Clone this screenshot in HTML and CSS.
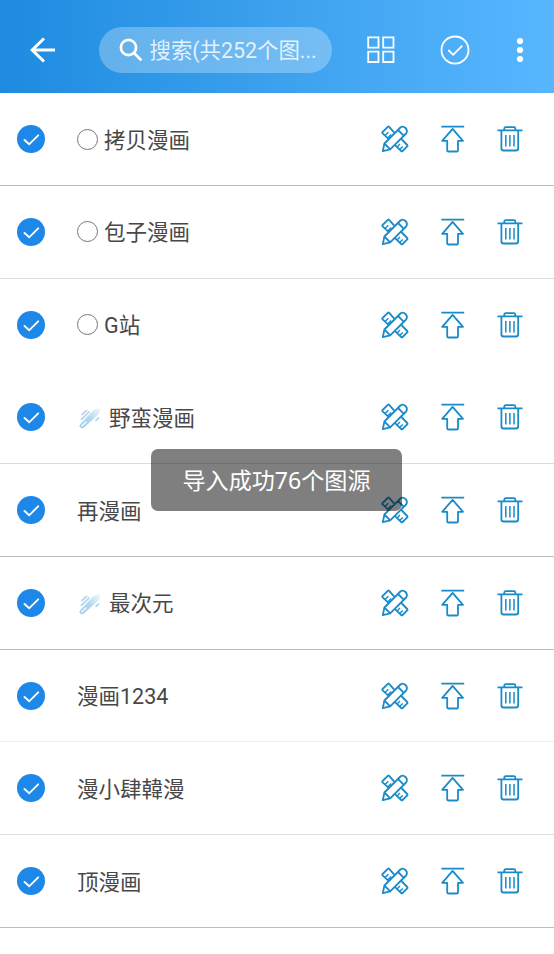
FILE: index.html
```html
<!DOCTYPE html>
<html lang="zh-CN">
  <head>
    <meta charset="UTF-8" />
    <meta name="viewport" content="width=device-width, initial-scale=1.0" />
    <title>图源管理</title>
    <link rel="stylesheet" href="styles.css">
  </head>
  <body>
    <svg class="sprite" aria-hidden="true">
      <defs>
        <linearGradient id="comet-fill" x1="1" y1="0" x2="0" y2="1">
          <stop offset="0" stop-color="#f4f9fc" />
          <stop offset="0.5" stop-color="#b0d8f2" />
          <stop offset="1" stop-color="#a5cbe6" />
        </linearGradient>
      </defs>
      <symbol id="check" viewBox="0 0 28 28">
        <circle cx="14" cy="14" r="14" fill="#1e88e9" />
        <path d="M7.5 15l4.7 4.3 9-9" fill="none" stroke="#fff" stroke-width="1.9" stroke-linecap="round" />
      </symbol>
      <symbol id="edit" viewBox="0 0 28 28">
        <path d="M13.2 7.6L8.2 1.8q-.7-.7-1.4 0L1.6 7q-.7.7 0 1.4l6 5.4M20.4 14l5.8 6q.7.7 0 1.4l-4.6 4.6q-.7.7-1.4 0L14 20.2" />
        <path d="M4 10.6l3.4-3.4M6.8 13l3.4-3.4M16 22l3-3M18.6 24.6l3.2-3.2" stroke-width="1.4" />
        <path d="M1.8 26.2l1.6-7.7L19.4 2.5q2.6-2 5.1.5t.6 5.5L9.2 24.4zM3.4 18.5l5.8 5.9M17 5l5.9 5.8" />
      </symbol>
      <symbol id="top" viewBox="0 0 28 28">
        <path d="M2.3 1.6h22.9M13.6 3.9L3.2 15.8h5v9.4q0 1.3 1.3 1.3h8.2q1.3 0 1.3-1.3v-9.4h5z" />
      </symbol>
      <symbol id="trash" viewBox="0 0 28 28">
        <path d="M1.5 5.4h25M8.3 5.2V3.6q0-1.4 1.4-1.4h8.2q1.4 0 1.4 1.4v1.6M5.4 5.6v17.6q0 2.3 2.3 2.3h12.2q2.3 0 2.3-2.3V5.6" />
        <path d="M9.8 10v11.6M13.9 10v11.6M18 10v11.6" stroke-width="1.5" />
      </symbol>
      <symbol id="comet" viewBox="0 0 22 22">
        <path d="M1.2 17.2L14.2 3.2q3-2.4 7-1.2.4 4-3 6.6L5 20.4Q2.8 22 1.2 20.6t0-3.4z" fill="url(#comet-fill)" />
        <path d="M3 7.6L7.6 3.4M2.4 12.4L10 5M17 13.4l2.6-2.4" fill="none" stroke="#b0d4ec" stroke-width="1.7" stroke-linecap="round" />
        <path d="M2.8 19l4-4" fill="none" stroke="#f1f9ff" stroke-width="1.6" stroke-linecap="round" />
      </symbol>
    </svg>

    <header class="toolbar">
      <svg class="back" viewBox="0 0 26 26">
        <path d="M14 1.5L2.2 13 14 24.5M2.5 13h22.5" />
      </svg>
      <div class="search">
        <svg class="search-icon" viewBox="0 0 24 24">
          <circle cx="9.5" cy="9.5" r="7.6" />
          <path d="M15 15l7.4 7.4" />
        </svg>
        <span>搜索(共252个图...</span>
      </div>
      <svg class="grid" viewBox="0 0 28 28">
        <path d="M1.2 1.3h10.3v10.3H1.2zM16.2 1.3h10.3v10.3H16.2zM1.2 15.7h10.3V26H1.2zM16.2 15.7h10.3V26H16.2z" />
      </svg>
      <svg class="select-all" viewBox="0 0 30 30">
        <circle cx="15" cy="15" r="13.5" />
        <path d="M8.8 15.5l4.4 4.3 8.6-8.6" stroke-linecap="round" />
      </svg>
      <svg class="more" viewBox="0 0 8 26">
        <circle cx="4" cy="4" r="3.1" />
        <circle cx="4" cy="13" r="3.1" />
        <circle cx="4" cy="22" r="3.1" />
      </svg>
    </header>

    <main class="list">
      <div class="row">
        <svg class="check"><use href="#check" /></svg>
        <div class="name"><i class="ring"></i>拷贝漫画</div>
        <svg class="icon"><use href="#edit" /></svg>
        <svg class="icon"><use href="#top" /></svg>
        <svg class="icon"><use href="#trash" /></svg>
      </div>
      <div class="row light">
        <svg class="check"><use href="#check" /></svg>
        <div class="name"><i class="ring"></i>包子漫画</div>
        <svg class="icon"><use href="#edit" /></svg>
        <svg class="icon"><use href="#top" /></svg>
        <svg class="icon"><use href="#trash" /></svg>
      </div>
      <div class="row no-line">
        <svg class="check"><use href="#check" /></svg>
        <div class="name"><i class="ring"></i>G站</div>
        <svg class="icon"><use href="#edit" /></svg>
        <svg class="icon"><use href="#top" /></svg>
        <svg class="icon"><use href="#trash" /></svg>
      </div>
      <div class="row light">
        <svg class="check"><use href="#check" /></svg>
        <div class="name"><svg class="comet"><use href="#comet" /></svg>野蛮漫画</div>
        <svg class="icon"><use href="#edit" /></svg>
        <svg class="icon"><use href="#top" /></svg>
        <svg class="icon"><use href="#trash" /></svg>
      </div>
      <div class="row">
        <svg class="check"><use href="#check" /></svg>
        <div class="name">再漫画</div>
        <svg class="icon"><use href="#edit" /></svg>
        <svg class="icon"><use href="#top" /></svg>
        <svg class="icon"><use href="#trash" /></svg>
      </div>
      <div class="row">
        <svg class="check"><use href="#check" /></svg>
        <div class="name"><svg class="comet"><use href="#comet" /></svg>最次元</div>
        <svg class="icon"><use href="#edit" /></svg>
        <svg class="icon"><use href="#top" /></svg>
        <svg class="icon"><use href="#trash" /></svg>
      </div>
      <div class="row faint">
        <svg class="check"><use href="#check" /></svg>
        <div class="name">漫画1234</div>
        <svg class="icon"><use href="#edit" /></svg>
        <svg class="icon"><use href="#top" /></svg>
        <svg class="icon"><use href="#trash" /></svg>
      </div>
      <div class="row light">
        <svg class="check"><use href="#check" /></svg>
        <div class="name">漫小肆韓漫</div>
        <svg class="icon"><use href="#edit" /></svg>
        <svg class="icon"><use href="#top" /></svg>
        <svg class="icon"><use href="#trash" /></svg>
      </div>
      <div class="row">
        <svg class="check"><use href="#check" /></svg>
        <div class="name">顶漫画</div>
        <svg class="icon"><use href="#edit" /></svg>
        <svg class="icon"><use href="#top" /></svg>
        <svg class="icon"><use href="#trash" /></svg>
      </div>
    </main>

    <div class="toast">导入成功76个图源</div>
  </body>
</html>
```

FILE: styles.css
```css
:root {
  --icon-blue: #1a8bc8;
  --line: #bdbdbd;
}

* {
  box-sizing: border-box;
}

body {
  font-family: Roboto, "Noto Sans CJK SC", sans-serif;
  margin: 0;
  height: 954px;
  background-color: #fff;
  color: #484848;
  overflow: hidden;
}

svg {
  display: block;
  flex: none;
}

.sprite {
  position: absolute;
  width: 0;
  height: 0;
}

.toolbar {
  display: flex;
  align-items: center;
  height: 93px;
  padding: 7px 30px 0;
  background: linear-gradient(to right, #1e8be0, #3ca1ee 50%, #58b6ff);
}

.toolbar svg {
  fill: none;
  stroke: #fff;
  stroke-width: 1.8;
}

.toolbar .back {
  width: 26px;
  height: 26px;
  stroke-width: 3;
}

.search {
  display: flex;
  align-items: center;
  width: 234px;
  height: 46px;
  margin-left: 42.5px;
  padding-left: 20px;
  border-radius: 23px;
  background-color: rgba(255, 255, 255, 0.28);
  color: rgba(255, 255, 255, 0.82);
  font-size: 21.4px;
  line-height: 30px;
  white-space: nowrap;
}

.search span {
  padding-top: 1px;
}

.toolbar .search-icon {
  width: 24px;
  height: 24px;
  margin-right: 7px;
  stroke-width: 2.7;
}

.grid {
  width: 28px;
  height: 28px;
  margin-left: 35.5px;
}

.select-all {
  width: 30px;
  height: 30px;
  margin-left: 44.5px;
}

.toolbar .more {
  width: 8px;
  height: 26px;
  margin-left: 46.5px;
  fill: #fff;
  stroke: none;
}

.row {
  display: flex;
  align-items: center;
  height: 92.75px;
  padding: 0.5px 30px 0 17px;
  border-bottom: 1px solid var(--line);
}

.row.light {
  border-color: #dcdcdc;
}

.row.faint {
  border-color: #eee;
}

.row.no-line {
  border-color: transparent;
}

.check {
  width: 28px;
  height: 28px;
}

.name {
  display: flex;
  flex: 1;
  align-items: center;
  padding: 3px 0 0 32px;
  font-size: 21.5px;
  line-height: 30px;
}

.ring {
  width: 21px;
  height: 21px;
  margin: -3px 6px 0 0;
  border: 1px solid #777;
  border-radius: 50%;
}

.comet {
  width: 22px;
  height: 22px;
  margin: -1px 8px 0 2px;
}

.icon {
  width: 28px;
  height: 28px;
  fill: none;
  stroke: var(--icon-blue);
  stroke-width: 1.8;
  stroke-linejoin: round;
}

.icon + .icon {
  margin-left: 29.5px;
}

.toast {
  position: absolute;
  top: 449px;
  left: 151px;
  width: 251px;
  height: 62px;
  border-radius: 7px;
  background-color: rgba(0, 0, 0, 0.5);
  color: #fff;
  font-family: "Noto Sans", "Noto Sans CJK SC", sans-serif;
  font-size: 23.1px;
  line-height: 63px;
  text-align: center;
}
```
